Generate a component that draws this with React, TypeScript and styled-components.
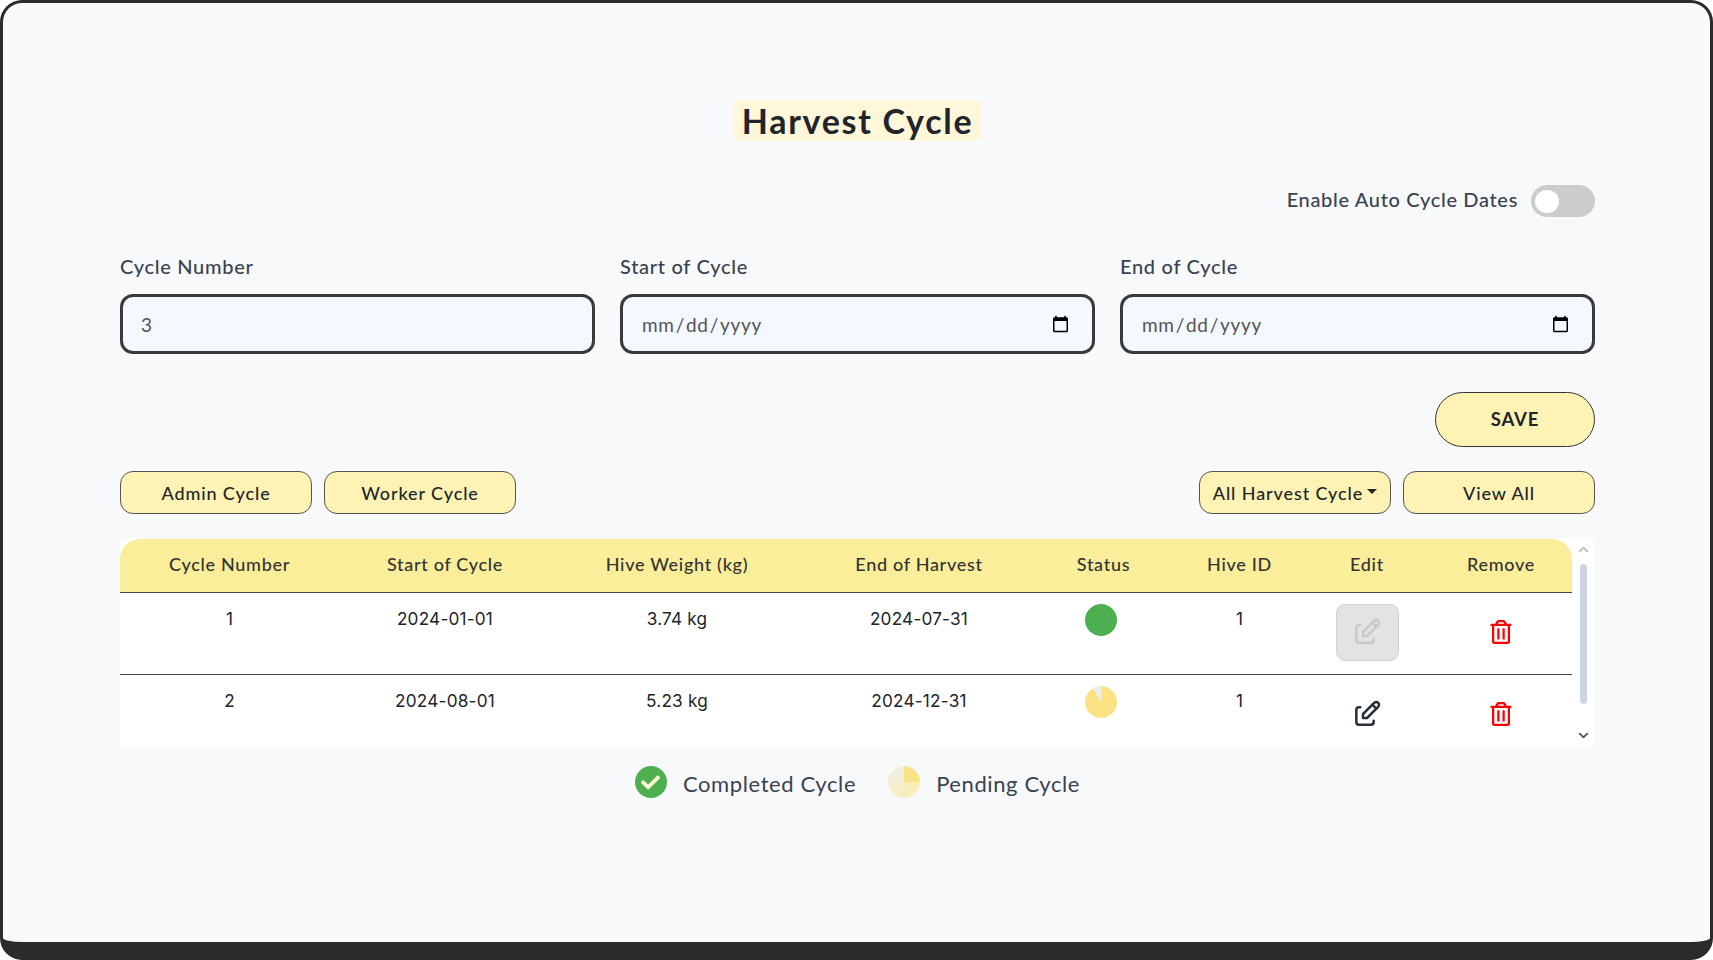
import React from 'react'
import styled, { createGlobalStyle } from 'styled-components'
import { FaCheck, FaRegTrashAlt } from 'react-icons/fa'
import { LuChevronDown, LuChevronUp } from 'react-icons/lu'
import { TbEdit } from 'react-icons/tb'

const fontStack = `Lato, 'Open Sans', sans-serif`

const GlobalStyle = createGlobalStyle`
  html, body {
    margin: 0;
    padding: 0;
    background: #fff;
    font-family: ${fontStack};
  }
  * {
    box-sizing: border-box;
  }
`

const Frame = styled.div`
  width: 1713px;
  height: 960px;
  background: #f8f9fb;
  border: solid #2b2b2b;
  border-width: 3px 3px 18px 3px;
  border-radius: 22px;
  padding: 97px 115px 0 117px;
  overflow: hidden;
`

const TitleRow = styled.div`
  display: flex;
  justify-content: center;
`

const Title = styled.h1`
  margin: 0;
  height: 41px;
  padding: 0 8px;
  background: #fff7d9;
  border-radius: 6px;
  color: #212529;
  font-size: 34px;
  line-height: 41px;
  font-weight: 700;
  letter-spacing: 1.7px;
`

const ToggleRow = styled.div`
  display: flex;
  justify-content: flex-end;
  align-items: center;
  gap: 13px;
  margin-top: 44px;
  height: 32px;
`

const ToggleLabel = styled.span`
  padding-bottom: 5px;
  color: #3a4250;
  font-size: 20px;
  letter-spacing: 0.67px;
  font-weight: 500;
`

const ToggleTrack = styled.div`
  width: 64px;
  height: 32px;
  border-radius: 16px;
  background: #ccc;
  padding: 5px 4px;
`

const ToggleKnob = styled.div`
  width: 24px;
  height: 23px;
  border-radius: 50%;
  background: #fff;
`

const Fields = styled.div`
  display: grid;
  grid-template-columns: repeat(3, 1fr);
  column-gap: 25px;
  margin-top: 39px;
`

const Field = styled.label`
  display: flex;
  flex-direction: column;
  gap: 18px;
`

const FieldLabel = styled.span`
  color: #3a4250;
  font-size: 20px;
  line-height: 20px;
  letter-spacing: 0.7px;
  font-weight: 500;
`

const Input = styled.input`
  width: 100%;
  height: 60px;
  padding: 0 20px 0 18px;
  background: #f4f8ff;
  border: 3px solid #3a3a3a;
  border-radius: 13px;
  color: #555;
  font-family: ${fontStack};
  font-size: 19px;
  letter-spacing: 0.7px;
  outline: none;
`

const SaveRow = styled.div`
  display: flex;
  justify-content: flex-end;
  margin-top: 38px;
`

const SaveButton = styled.button`
  width: 160px;
  height: 55px;
  padding: 0 0 2px;
  background: #fef3b5;
  border: 1.5px solid #333;
  border-radius: 28px;
  color: #212529;
  font-family: ${fontStack};
  font-size: 18.5px;
  font-weight: 700;
  letter-spacing: 0.8px;
`

const Toolbar = styled.div`
  display: flex;
  justify-content: space-between;
  margin-top: 24px;
`

const ButtonGroup = styled.div`
  display: flex;
  gap: 12px;
`

const PillButton = styled.button`
  width: 192px;
  height: 43px;
  background: #fef3b5;
  border: 1.5px solid #555;
  border-radius: 13px;
  color: #212529;
  font-family: ${fontStack};
  font-size: 18px;
  font-weight: 500;
  letter-spacing: 0.9px;
  display: flex;
  align-items: center;
  justify-content: center;
  gap: 4px;
  padding: 0;
`

const Caret = styled.span`
  width: 0;
  height: 0;
  margin-bottom: 2px;
  border-top: 5px solid #212529;
  border-left: 5px solid transparent;
  border-right: 5px solid transparent;
`

const TableCard = styled.div`
  display: flex;
  height: 208px;
  margin-top: 25px;
  background: #fff;
  border-radius: 0 0 4px 4px;
  overflow: hidden;
`

const TableClip = styled.div`
  flex: 1;
  overflow: hidden;
`

const Table = styled.table`
  width: 1452px;
  table-layout: fixed;
  border-collapse: collapse;
  background: #fff;
`

const HeadCell = styled.th<{ $width: number; $radius?: 'left' | 'right' }>`
  width: ${p => p.$width}px;
  height: 53px;
  padding: 0 0 2px;
  background: #faee9a;
  border-bottom: 1.5px solid #444;
  color: #333;
  font-size: 18px;
  font-weight: 500;
  letter-spacing: 0.7px;
  border-top-left-radius: ${p => (p.$radius === 'left' ? '20px' : '0')};
  border-top-right-radius: ${p => (p.$radius === 'right' ? '20px' : '0')};
  &:last-child {
    padding-left: 3px;
  }
`

const Row = styled.tr`
  height: 82px;
  border-bottom: 1.5px solid #444;
`

const Cell = styled.td`
  padding: 11px 0 0;
  height: 82px;
  vertical-align: top;
  text-align: center;
  color: #212529;
  font-family: Inter, sans-serif;
  font-size: 17.2px;
  line-height: 30px;
  letter-spacing: 0.2px;
  &:last-child {
    padding-left: 3px;
  }
`

const StatusDot = styled.span<{ $pending?: boolean }>`
  display: block;
  width: 32px;
  height: 32px;
  margin: 0 auto;
  position: relative;
  left: -3px;
  border-radius: 50%;
  background: ${p => (p.$pending ? 'conic-gradient(#fbe285 0 330deg, #eeeeee 330deg 360deg)' : '#4caf50')};
`

const EditButton = styled.span<{ $disabled?: boolean }>`
  display: flex;
  align-items: center;
  justify-content: center;
  width: 63px;
  height: 57px;
  margin: 0 auto;
  border-radius: 9px;
  border: 1px solid ${p => (p.$disabled ? '#d2d2d2' : 'transparent')};
  background: ${p => (p.$disabled ? '#e3e3e3' : 'transparent')};
  color: ${p => (p.$disabled ? '#c9c9c9' : '#2a3038')};
`

const RemoveIcon = styled.span`
  display: flex;
  align-items: center;
  justify-content: center;
  height: 57px;
  color: #ff0000;
  font-size: 24px;
`

const ScrollRail = styled.div`
  width: 23px;
  display: flex;
  flex-direction: column;
  align-items: center;
  justify-content: space-between;
  font-size: 15px;
  padding: 3px 0 4px;
`

const RailArrow = styled.span<{ $muted?: boolean }>`
  display: flex;
  height: 15px;
  color: ${p => (p.$muted ? '#bdbdbd' : '#555')};
`

const RailThumb = styled.div`
  width: 7px;
  height: 140px;
  margin-bottom: 17px;
  border-radius: 4px;
  background: #cbd5e1;
`

const Legend = styled.div`
  display: flex;
  justify-content: center;
  align-items: center;
  gap: 32px;
  margin-top: 19px;
`

const LegendItem = styled.div`
  display: flex;
  align-items: center;
  gap: 16px;
`

const LegendText = styled.span`
  padding-top: 3px;
  color: #3a4250;
  font-size: 22px;
  letter-spacing: 0.6px;
`

const LegendDone = styled.span`
  display: flex;
  align-items: center;
  justify-content: center;
  width: 32px;
  height: 32px;
  border-radius: 50%;
  background: #4caf50;
  color: #fdf6d0;
  font-size: 19px;
`

const LegendPending = styled.span`
  width: 32px;
  height: 32px;
  border-radius: 50%;
  background: conic-gradient(#fbe285 0 90deg, #fbeeb0 90deg, #f7eec4 200deg, #efefe6 360deg);
`

const columns = [
  { label: 'Cycle Number', width: 219 },
  { label: 'Start of Cycle', width: 212 },
  { label: 'Hive Weight (kg)', width: 252 },
  { label: 'End of Harvest', width: 232 },
  { label: 'Status', width: 137 },
  { label: 'Hive ID', width: 135 },
  { label: 'Edit', width: 120 },
  { label: 'Remove', width: 145 },
]

const cycles = [
  { id: 1, start: '2024-01-01', weight: '3.74 kg', end: '2024-07-31', pending: false, hive: 1 },
  { id: 2, start: '2024-08-01', weight: '5.23 kg', end: '2024-12-31', pending: true, hive: 1 },
]

const App: React.FC = () => {
  return (
    <>
      <GlobalStyle />
      <Frame>
        <TitleRow>
          <Title>Harvest Cycle</Title>
        </TitleRow>

        <ToggleRow>
          <ToggleLabel>Enable Auto Cycle Dates</ToggleLabel>
          <ToggleTrack>
            <ToggleKnob />
          </ToggleTrack>
        </ToggleRow>

        <Fields>
          <Field>
            <FieldLabel>Cycle Number</FieldLabel>
            <Input type='text' defaultValue='3' />
          </Field>
          <Field>
            <FieldLabel>Start of Cycle</FieldLabel>
            <Input type='date' />
          </Field>
          <Field>
            <FieldLabel>End of Cycle</FieldLabel>
            <Input type='date' />
          </Field>
        </Fields>

        <SaveRow>
          <SaveButton>SAVE</SaveButton>
        </SaveRow>

        <Toolbar>
          <ButtonGroup>
            <PillButton>Admin Cycle</PillButton>
            <PillButton>Worker Cycle</PillButton>
          </ButtonGroup>
          <ButtonGroup>
            <PillButton>
              All Harvest Cycle
              <Caret />
            </PillButton>
            <PillButton>View All</PillButton>
          </ButtonGroup>
        </Toolbar>

        <TableCard>
          <TableClip>
            <Table>
              <thead>
                <tr>
                  {columns.map((col, index) => (
                    <HeadCell
                      key={col.label}
                      $width={col.width}
                      $radius={index === 0 ? 'left' : index === columns.length - 1 ? 'right' : undefined}
                    >
                      {col.label}
                    </HeadCell>
                  ))}
                </tr>
              </thead>
              <tbody>
                {cycles.map(cycle => (
                  <Row key={cycle.id}>
                    <Cell>{cycle.id}</Cell>
                    <Cell>{cycle.start}</Cell>
                    <Cell>{cycle.weight}</Cell>
                    <Cell>{cycle.end}</Cell>
                    <Cell>
                      <StatusDot $pending={cycle.pending} />
                    </Cell>
                    <Cell>{cycle.hive}</Cell>
                    <Cell>
                      <EditButton $disabled={!cycle.pending}>
                        <TbEdit size={32} strokeWidth={1.9} />
                      </EditButton>
                    </Cell>
                    <Cell>
                      <RemoveIcon>
                        <FaRegTrashAlt />
                      </RemoveIcon>
                    </Cell>
                  </Row>
                ))}
              </tbody>
            </Table>
          </TableClip>
          <ScrollRail>
            <RailArrow $muted>
              <LuChevronUp strokeWidth={3} />
            </RailArrow>
            <RailThumb />
            <RailArrow>
              <LuChevronDown strokeWidth={3} />
            </RailArrow>
          </ScrollRail>
        </TableCard>

        <Legend>
          <LegendItem>
            <LegendDone>
              <FaCheck />
            </LegendDone>
            <LegendText>Completed Cycle</LegendText>
          </LegendItem>
          <LegendItem>
            <LegendPending />
            <LegendText>Pending Cycle</LegendText>
          </LegendItem>
        </Legend>
      </Frame>
    </>
  )
}

export default App
